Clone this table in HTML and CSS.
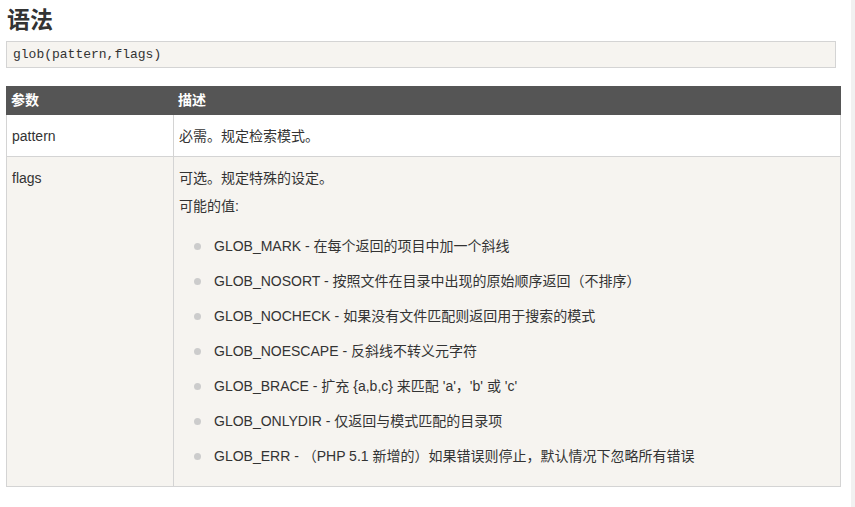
FILE: index.html
```html
<!DOCTYPE html>
<html lang="zh">
<head>
<meta charset="utf-8">
<title>语法</title>
<link rel="stylesheet" href="styles.css">
</head>
<body>
<div class="page">
  <main class="main">
    <h2 class="title">语法</h2>
    <div class="code">glob(pattern,flags)</div>
    <table class="ref">
      <colgroup><col class="c1"><col class="c2"></colgroup>
      <thead>
        <tr><th>参数</th><th>描述</th></tr>
      </thead>
      <tbody>
        <tr><td>pattern</td><td>必需。规定检索模式。</td></tr>
        <tr class="alt">
          <td>flags</td>
          <td>
            <p>可选。规定特殊的设定。</p>
            <p>可能的值:</p>
            <ul class="vals">
              <li>GLOB_MARK - 在每个返回的项目中加一个斜线</li>
              <li>GLOB_NOSORT - 按照文件在目录中出现的原始顺序返回（不排序）</li>
              <li>GLOB_NOCHECK - 如果没有文件匹配则返回用于搜索的模式</li>
              <li>GLOB_NOESCAPE - 反斜线不转义元字符</li>
              <li>GLOB_BRACE - 扩充 {a,b,c} 来匹配 'a'，'b' 或 'c'</li>
              <li>GLOB_ONLYDIR - 仅返回与模式匹配的目录项</li>
              <li>GLOB_ERR - （PHP 5.1 新增的）如果错误则停止，默认情况下忽略所有错误</li>
            </ul>
          </td>
        </tr>
      </tbody>
    </table>
  </main>
  <div class="strip"></div>
</div>
</body>
</html>
```
FILE: styles.css
```css
html, body {
  margin: 0;
  padding: 0;
  background: #fff;
}
body {
  font-family: "Liberation Sans", Arial, "Noto Sans CJK SC", sans-serif;
  font-size: 14px;
  color: #333;
}
.page {
  display: flex;
  min-height: 507px;
}
.main {
  width: 835px;
  padding: 5px 0 0 6px;
}
.strip {
  margin-left: auto;
  width: 4px;
  background: #f1f1f1;
}
.title {
  margin: 0 0 6px 1px;
  font-size: 23px;
  line-height: 30px;
  font-weight: bold;
  color: #333;
}
.code {
  width: 816px;
  border: 1px solid #d4d4d4;
  background: #f6f4f0;
  padding: 5px 6px;
  font-family: "Liberation Mono", "Courier New", monospace;
  font-size: 13px;
  line-height: 15px;
  color: #333;
}
.ref {
  margin-top: 18px;
  width: 835px;
  border-collapse: collapse;
  table-layout: fixed;
}
.c1 { width: 167px; }
.ref th {
  background: #555;
  color: #fff;
  font-weight: bold;
  text-align: left;
  padding: 5px 4px;
  line-height: 17px;
  border: 1px solid #555;
}
.ref td {
  border: 1px solid #d4d4d4;
  padding: 7px 5px 6px;
  line-height: 28px;
  vertical-align: top;
  background: #fff;
}
.ref tr.alt td {
  background: #f6f4f0;
}
.ref p {
  margin: 0;
}
.vals {
  list-style: none;
  margin: 9px 0 6px;
  padding: 0 0 0 35px;
}
.vals li {
  position: relative;
  line-height: 35px;
}
.vals li::before {
  content: "";
  position: absolute;
  left: -20px;
  top: 14px;
  width: 7px;
  height: 7px;
  border-radius: 50%;
  background: #ccc;
}
```
